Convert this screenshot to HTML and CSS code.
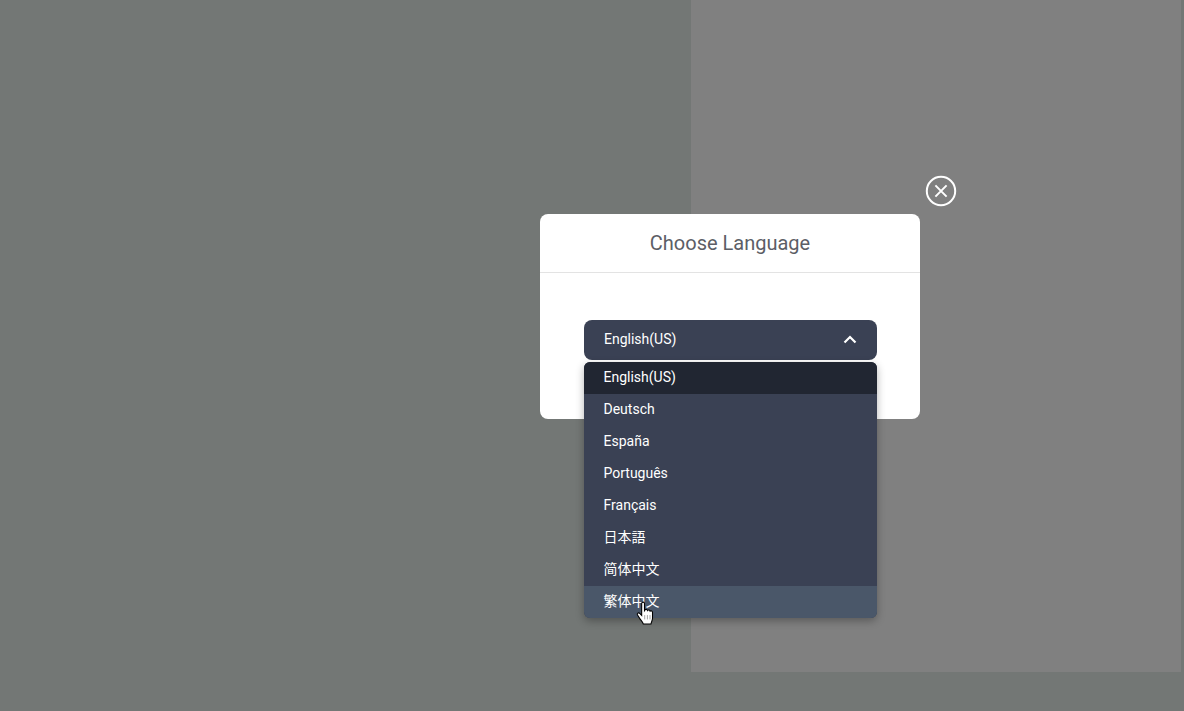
FILE: index.html
```html
<!DOCTYPE html>
<html lang="en">
<head>
<meta charset="utf-8">
<title>Choose Language</title>
<link rel="stylesheet" href="styles.css">
</head>
<body>
<div class="page">
  <div class="panes">
    <div class="pane-left"></div>
    <div class="pane-right"></div>
  </div>
</div>
<div class="overlay">
  <div class="modal">
    <button class="close" aria-label="Close">
      <svg width="32" height="32" viewBox="0 0 32 32" fill="none" stroke="#fff"><circle cx="16" cy="16" r="14.2" stroke-width="2"/><path d="M10.400 10.400 21.600 21.600M21.600 10.400 10.400 21.600" stroke-width="2"/></svg>
    </button>
    <div class="modal-header">Choose Language</div>
    <div class="modal-body">
      <div class="select">
        <div class="select-box">
          <span class="select-label">English(US)</span>
          <svg class="chevron" width="14" height="9" viewBox="0 0 14 9" fill="none" stroke="#fff" stroke-width="2.200"><path d="M1.500 7.500 7 2l5.500 5.500"/></svg>
        </div>
        <ul class="menu">
          <li class="item selected">English(US)</li>
          <li class="item">Deutsch</li>
          <li class="item">España</li>
          <li class="item">Português</li>
          <li class="item">Français</li>
          <li class="item cjk" lang="ja">日本語</li>
          <li class="item cjk" lang="zh-CN">简体中文</li>
          <li class="item cjk hover" lang="zh-TW">繁体中文
            <svg class="cursor" width="20" height="26" viewBox="0 0 18 24"><path d="M5 2.200c0-1.600 2.600-1.600 2.600 0V9l.4-.6c.5-1 2.200-.8 2.400.4.600-.8 2.200-.6 2.400.6.800-.6 2.200-.2 2.200 1v5.500c0 2-1 3.200-1.400 5.300H6.500C5.800 19.200 4.500 18 3.300 16.300L1.200 13c-.9-1.500.9-2.700 2-1.500L5 13.300Z" fill="#fff" stroke="#000" stroke-width="1"/><path d="M7.800 13v4M10.300 13v4M12.700 13v4" stroke="#8a8a8a" stroke-width=".7"/></svg>
          </li>
        </ul>
      </div>
    </div>
  </div>
</div>
</body>
</html>
```
FILE: styles.css
```css
* { box-sizing: border-box; }
html, body { margin: 0; height: 100%; overflow: hidden; }
body { background: #737775; font-family: Roboto, "Noto Sans CJK SC", sans-serif; }
.page { height: 711px; }
.panes { display: flex; height: 672px; }
.pane-left { width: 691px; }
.pane-right { width: 490px; background: #808080; }
.overlay { position: absolute; left: 540px; top: 214px; }
.modal { position: relative; width: 380px; height: 205px; background: #fff; border-radius: 8px; }
.close { position: absolute; left: 385px; top: -39px; width: 32px; height: 32px; padding: 0; border: 0; background: none; display: flex; }
.modal-header { height: 59px; border-bottom: 1px solid #e3e3e3; display: flex; align-items: center; justify-content: center; font-size: 20px; color: #5c5e66; padding-bottom: 1px; }
.modal-body { padding: 47px 43px 0 44px; }
.select { position: relative; }
.select-box { height: 40px; background: #3a4154; border-radius: 8px; color: #fff; font-size: 14px; font-weight: 450; display: flex; align-items: center; justify-content: space-between; padding: 0 20px; }
.select-label { position: relative; top: -1px; }
.chevron { position: relative; top: -1px; }
.menu { position: absolute; left: 0; right: 0; top: 42px; margin: 0; padding: 0; list-style: none; background: #3a4154; border-radius: 6px; box-shadow: 0 3px 8px rgba(0,0,0,.3); }
.item { position: relative; height: 32px; line-height: 30px; padding: 0 19.500px; color: #fff; font-size: 14px; font-weight: 450; }
.cjk { font-weight: 400; }
.selected { background: #212632; border-radius: 6px 6px 0 0; }
.hover { background: #4a5769; border-radius: 0 0 6px 6px; }
.cursor { position: absolute; left: 52px; top: 15px; }
```
